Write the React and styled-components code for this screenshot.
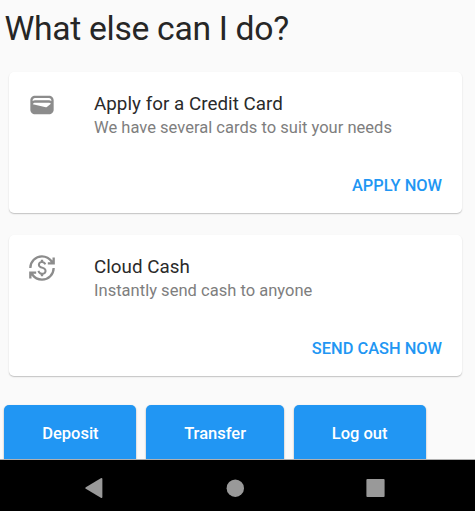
import React from 'react';
import styled, { createGlobalStyle } from 'styled-components';
import { MdCurrencyExchange } from 'react-icons/md';

const GlobalStyle = createGlobalStyle`
  * { box-sizing: border-box; }
  body { margin: 0; background: #fafafa; font-family: Roboto, sans-serif; }
`;

const Screen = styled.div`
  display: flex;
  flex-direction: column;
  width: 475px;
  height: 511px;
  overflow: hidden;
  background: #fafafa;
`;

const Content = styled.main`
  flex: 1;
  min-height: 0;
  overflow: hidden;
  border-bottom: 1px solid #b0b0b0;
`;

const Title = styled.h1`
  margin: 9px 0 23px 4.5px;
  font-size: 33.7px;
  line-height: 40px;
  font-weight: 400;
  letter-spacing: -0.32px;
  color: #262626;
  white-space: nowrap;
`;

const Cards = styled.div`
  display: flex;
  flex-direction: column;
  gap: 22px;
  padding: 0 13px 0 9px;
`;

const Card = styled.section`
  display: flex;
  flex-direction: column;
  justify-content: space-between;
  height: 141px;
  padding: 19px 20px 16px 19px;
  border-radius: 5px;
  background: #fff;
  box-shadow: 0 1px 1px rgba(0, 0, 0, 0.14), 0 1px 2px rgba(0, 0, 0, 0.1);
`;

const CardHeader = styled.div`
  display: flex;
  gap: 38px;
`;

const IconBox = styled.div`
  display: flex;
  width: 28px;
  height: 28px;
  color: #8c8c8c;
`;

const CardTitle = styled.h2`
  margin: 1px 0 0;
  font-size: 18.8px;
  line-height: 24px;
  font-weight: 400;
  letter-spacing: 0.03px;
  color: #2a2a2a;
  white-space: nowrap;
`;

const CardText = styled.p`
  margin: 0;
  font-size: 16.5px;
  line-height: 24px;
  color: #7e7e7e;
  white-space: nowrap;
  letter-spacing: 0.02px;
`;

const TextButton = styled.button`
  align-self: flex-end;
  padding: 0;
  border: 0;
  background: none;
  font: 500 16.4px/22px Roboto, sans-serif;
  color: #2196f3;
`;

const Actions = styled.div`
  display: flex;
  gap: 9.6px;
  padding: 29px 0 0 4.3px;
`;

const ActionButton = styled.button`
  width: ${(p) => p.$width};
  height: 58px;
  flex: none;
  padding: 0;
  border: 0;
  border-radius: 5px;
  background: #2196f3;
  box-shadow: 0 1px 2px rgba(0, 0, 0, 0.35);
  font: 500 16.5px/22px Roboto, sans-serif;
  color: #fff;
`;

const NavBar = styled.nav`
  display: grid;
  grid-template-columns: repeat(3, 140.5px);
  justify-content: center;
  align-items: center;
  justify-items: center;
  flex: none;
  height: 51px;
  padding: 5px 5px 0 0;
  background: #000;
`;

const NavIcon = styled.svg`
  display: block;
  fill: #999;
`;

const WalletIcon = () => (
  <svg viewBox="0 0 24 24" width="28" height="28" fill="currentColor">
    <path d="M18 4H6C3.79 4 2 5.79 2 8v8c0 2.21 1.79 4 4 4h12c2.21 0 4-1.79 4-4V8c0-2.21-1.79-4-4-4zm-1.86 9.77c-.24.2-.57.28-.88.2L4.15 11.25C4.45 10.52 5.16 10 6 10h12c.67 0 1.26.34 1.63.84l-3.49 2.93zM6 6h12c1.1 0 2 .9 2 2v.55c-.59-.34-1.27-.55-2-.55H6c-.73 0-1.41.21-2 .55V8c0-1.1.9-2 2-2z" />
  </svg>
);

function InfoCard({ icon, title, text, action }) {
  return (
    <Card>
      <CardHeader>
        <IconBox>{icon}</IconBox>
        <div>
          <CardTitle>{title}</CardTitle>
          <CardText>{text}</CardText>
        </div>
      </CardHeader>
      <TextButton>{action}</TextButton>
    </Card>
  );
}

export default function App() {
  return (
    <Screen>
      <GlobalStyle />
      <Content>
        <Title>What else can I do?</Title>
        <Cards>
          <InfoCard
            icon={<WalletIcon />}
            title="Apply for a Credit Card"
            text="We have several cards to suit your needs"
            action="APPLY NOW"
          />
          <InfoCard
            icon={<MdCurrencyExchange size={28} />}
            title="Cloud Cash"
            text="Instantly send cash to anyone"
            action="SEND CASH NOW"
          />
        </Cards>
        <Actions>
          <ActionButton $width="132.2px">Deposit</ActionButton>
          <ActionButton $width="138px">Transfer</ActionButton>
          <ActionButton $width="132px">Log out</ActionButton>
        </Actions>
      </Content>
      <NavBar>
        <NavIcon width="19" height="20" viewBox="0 0 19 20">
          <path d="M0.8 9.2 15.8 0.3Q17.4-.3 17.4 1V19Q17.4 20.3 15.8 19.7L.8 10.8Q-.3 10 .8 9.2Z" />
        </NavIcon>
        <NavIcon width="18" height="18" viewBox="0 0 18 18">
          <circle cx="9.3" cy="9.2" r="8.7" />
        </NavIcon>
        <NavIcon width="19" height="18" viewBox="0 0 19 18">
          <rect x="0.4" width="18.2" height="18" rx="1" />
        </NavIcon>
      </NavBar>
    </Screen>
  );
}
